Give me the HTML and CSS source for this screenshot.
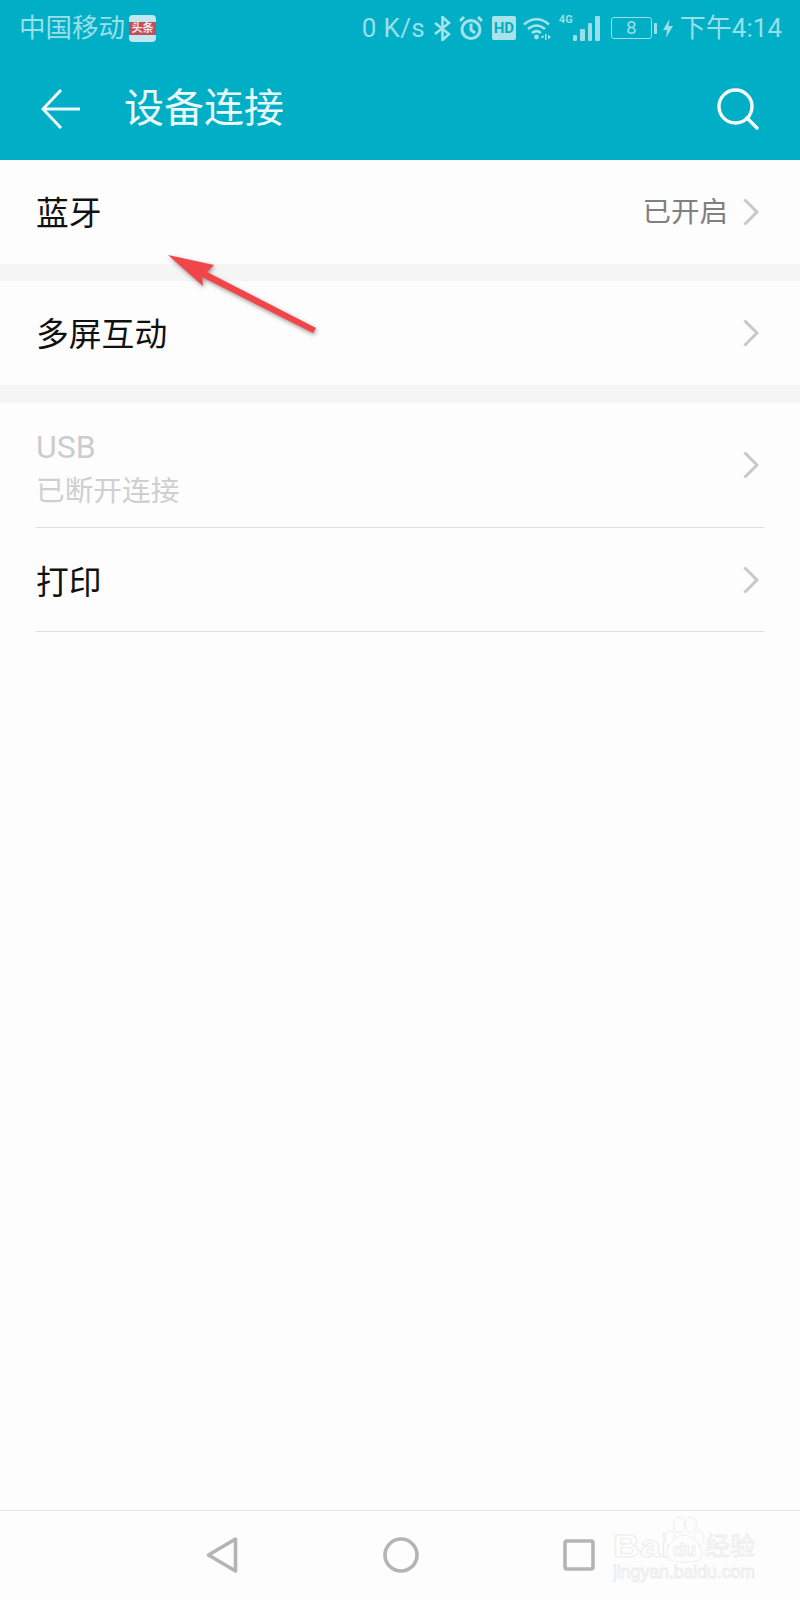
FILE: index.html
```html
<!DOCTYPE html>
<html lang="zh-CN">
<head>
<meta charset="utf-8">
<title>设备连接</title>
<link rel="stylesheet" href="styles.css">
</head>
<body>
<div class="page">
  <header class="appbar">
    <div class="status">
      <span class="carrier">中国移动</span>
      <span class="news-badge"><span class="news-band">头条</span></span>
      <span class="status-right">
        <span class="speed">0 K/s</span>
        <svg class="ic ic-bt" viewBox="0 0 17 25"><path d="M1 7l14 11-6.500 6V1l6.500 6L1 18" /></svg>
        <svg class="ic ic-alarm" viewBox="0 0 24 24"><circle cx="12" cy="13.500" r="9"/><path d="M12 7.500v6.500l4 3M1 5l4-4M23 5l-4-4"/></svg>
        <span class="hd">HD</span>
        <svg class="ic ic-wifi" viewBox="0 0 29 24"><path d="M1.500 8.500c7.500-7 17.500-7 25 0M5.500 13c5.500-4.500 11.500-4.500 17 0M9.500 17c3-2.500 6-2.500 9 0"/><circle class="solid" cx="14" cy="21" r="2.400"/><path class="solid" d="M21 18.500l-3 3.500h3zM22.500 18h1.500v6h-1.500zM25.500 18.500l3 2.500-3 2.500z"/></svg>
        <span class="net">4G</span>
        <span class="signal"><i class="bar b1"></i><i class="bar b2"></i><i class="bar b3"></i><i class="bar b4"></i></span>
        <span class="battery">8</span>
        <span class="nub"></span>
        <svg class="ic-bolt" viewBox="0 0 10 19"><path d="M6.500 0L0 11h4l-1 8 7-12H5.500z"/></svg>
        <span class="clock">下午4:14</span>
      </span>
    </div>
    <div class="toolbar">
      <svg class="back" viewBox="0 0 40 40"><path d="M39 20H2M20 1L2 20l18 19"/></svg>
      <h1 class="title">设备连接</h1>
      <svg class="search" viewBox="0 0 42 42"><circle cx="18.500" cy="18.500" r="16.500"/><path d="M30 30l10 10"/></svg>
    </div>
  </header>

  <main class="list">
    <section class="group">
      <div class="row row-tall">
        <span class="label">蓝牙</span>
        <span class="trail"><span class="value">已开启</span><svg class="chev" viewBox="0 0 16 28"><path d="M1.500 1.500L14 14 1.500 26.500"/></svg></span>
      </div>
    </section>
    <section class="group">
      <div class="row row-tall">
        <span class="label">多屏互动</span>
        <span class="trail"><svg class="chev" viewBox="0 0 16 28"><path d="M1.500 1.500L14 14 1.500 26.500"/></svg></span>
      </div>
    </section>
    <section class="group group-last">
      <div class="row row-usb row-line">
        <span class="stack"><span class="label label-off">USB</span><span class="sub">已断开连接</span></span>
        <span class="trail"><svg class="chev" viewBox="0 0 16 28"><path d="M1.500 1.500L14 14 1.500 26.500"/></svg></span>
      </div>
      <div class="row row-tall row-line">
        <span class="label label-low">打印</span>
        <span class="trail"><svg class="chev" viewBox="0 0 16 28"><path d="M1.500 1.500L14 14 1.500 26.500"/></svg></span>
      </div>
    </section>
  </main>

  <nav class="navbar">
    <svg class="nav-ic nav-back" viewBox="0 0 32 36"><path d="M29.500 2L2.500 18l27 16z"/></svg>
    <svg class="nav-ic nav-home" viewBox="0 0 36 36"><circle cx="18" cy="18" r="16"/></svg>
    <svg class="nav-ic nav-recent" viewBox="0 0 32 32"><rect x="2" y="2" width="28" height="28" rx="2"/></svg>
  </nav>

  <svg class="arrow" viewBox="0 0 800 400" aria-hidden="true">
    <path d="M168 255L214 265 207 272 316 328 313 333 202 277 203 286z"/>
  </svg>

  <svg class="watermark" viewBox="0 0 150 72" aria-hidden="true">
    <text class="wm-bai" x="0" y="42" textLength="58" lengthAdjust="spacingAndGlyphs">Bai</text>
    <g class="wm-paw">
      <ellipse cx="57" cy="23" rx="5" ry="7"/>
      <ellipse cx="66" cy="10" rx="5.500" ry="8"/>
      <ellipse cx="78" cy="10" rx="5.500" ry="8"/>
      <ellipse cx="86" cy="23" rx="5" ry="7"/>
      <path d="M54 38c0-9 9-18 17-18s18 10 18 19c0 7-6 8-18 8s-17-2-17-9z"/>
    </g>
    <text class="wm-du" x="60" y="41">du</text>
    <text class="wm-cn" x="92" y="40">经验</text>
    <text class="wm-url" x="0" y="63" textLength="142" lengthAdjust="spacingAndGlyphs">jingyan.baidu.com</text>
  </svg>
</div>
</body>
</html>
```
FILE: styles.css
```css
* { box-sizing: border-box; }
html, body { margin: 0; padding: 0; }
body {
  background: #fdfdfd;
  font-family: Roboto, "Noto Sans CJK SC", "Noto Sans", sans-serif;
}
.page {
  position: relative;
  width: 800px;
  height: 1600px;
  display: flex;
  flex-direction: column;
  overflow: hidden;
  background: #fdfdfd;
}

/* App bar */
.appbar { background: #00aec5; height: 160px; flex: none; }
.status {
  height: 54px;
  display: flex;
  align-items: center;
  padding: 2px 18px 0 19px;
  color: #9adfe8;
  font-size: 26px;
  line-height: 30px;
}
.carrier { font-size: 26.500px; }
.news-badge {
  width: 27px;
  height: 27px;
  margin-left: 4px;
  border-radius: 4px;
  background: #c3e7ee;
  display: flex;
  align-items: center;
}
.news-band {
  width: 100%;
  height: 13px;
  background: #c2505c;
  color: #f6e4e4;
  font-size: 11px;
  font-weight: 700;
  line-height: 13px;
  text-align: center;
}
.status-right { margin-left: auto; display: flex; align-items: center; height: 52px; }
.speed { width: 72px; letter-spacing: .3px; }
.ic { fill: none; stroke: #a4e2ea; stroke-width: 2.600; display: block; }
.ic .solid { fill: #a4e2ea; stroke: none; }
.ic-bt { width: 17px; height: 25px; }
.ic-alarm { width: 24px; height: 24px; margin-left: 8px; stroke-width: 3; }
.hd {
  width: 24px;
  height: 24px;
  margin-left: 9px;
  border-radius: 2px;
  background: #a9e3ea;
  color: #00aec5;
  font-size: 15px;
  font-weight: 700;
  line-height: 24px;
  text-align: center;
}
.ic-wifi { width: 30px; height: 24px; margin-left: 6px; }
.net {
  width: 14px;
  margin-left: 7px;
  align-self: flex-start;
  margin-top: 12px;
  font-size: 11px;
  font-weight: 700;
  line-height: 12px;
  white-space: nowrap;
}
.signal { display: flex; align-items: flex-end; gap: 3px; height: 25px; width: 27px; }
.bar { display: block; width: 4.500px; background: #9adfe8; border-radius: 1px; }
.b1 { height: 6px; }
.b2 { height: 12px; }
.b3 { height: 18px; }
.b4 { height: 25px; }
.battery {
  width: 41px;
  height: 22px;
  margin-left: 11px;
  border: 1.500px solid #9adfe8;
  border-radius: 3px;
  font-size: 19px;
  line-height: 19px;
  text-align: center;
}
.nub { width: 3px; height: 11px; margin-left: 2px; background: #9adfe8; border-radius: 1px; }
.ic-bolt { width: 10px; height: 19px; margin-left: 6px; fill: #9adfe8; display: block; }
.clock { margin-left: 7px; white-space: nowrap; }

.toolbar {
  height: 106px;
  padding: 3px 41px 0 41px;
  display: flex;
  align-items: center;
}
.back { width: 40px; height: 40px; fill: none; stroke: #eefafb; stroke-width: 3; flex: none; }
.title {
  margin: 0 0 0 43px;
  color: #eafafb;
  font-size: 40px;
  font-weight: 400;
  line-height: 48px;
}
.search { width: 42px; height: 42px; margin-left: auto; fill: none; stroke: #f7fdfe; stroke-width: 3.400; stroke-linecap: round; flex: none; }

/* List */
.list { flex: 1; }
.group { background: #fdfdfd; border-bottom: 17px solid #f5f5f5; }
.group + .group + .group { border-top: 1px solid #f5f5f5; }
.group-last { border-bottom: 0; }
.row {
  display: flex;
  align-items: center;
  justify-content: space-between;
  margin: 0 36px;
  padding-right: 5px;
}
.row-tall { height: 104px; }
.row-usb { height: 125px; }
.row-line { border-bottom: 1px solid #dedede; }
.label { color: #111; font-size: 32.800px; line-height: 40px; padding-top: 3px; }
.label-low { padding-top: 7px; }
.label-off { color: #cccccc; font-size: 32px; line-height: 38px; padding-top: 0; }
.stack { display: flex; flex-direction: column; padding-top: 6px; }
.sub { color: #cfcfcf; font-size: 28.700px; line-height: 36px; margin-top: 7px; }
.trail { display: flex; align-items: center; }
.value { color: #808080; font-size: 28.500px; line-height: 36px; margin-right: 15px; padding-top: 2px; }
.chev { width: 16px; height: 28px; fill: none; stroke: #c8c8c8; stroke-width: 3; display: block; }

/* Navigation bar */
.navbar {
  height: 90px;
  flex: none;
  border-top: 1px solid #e2e2e2;
  position: relative;
  display: grid;
  grid-template-columns: 206px 32px 145px 36px 144px 32px;
  align-items: center;
  padding-bottom: 1px;
}
.nav-ic { fill: none; stroke: #b4b4b4; stroke-width: 3.600; stroke-linejoin: round; display: block; }
.nav-back { width: 32px; height: 36px; grid-column: 2; }
.nav-home { width: 36px; height: 36px; grid-column: 4; }
.nav-recent { width: 32px; height: 32px; grid-column: 6; }

/* Overlays */
.arrow {
  position: absolute;
  left: 0;
  top: 0;
  width: 800px;
  height: 400px;
  fill: #f0464a;
  filter: drop-shadow(1px 2px 2px rgba(60, 20, 20, .45));
  pointer-events: none;
}
.watermark {
  position: absolute;
  left: 613px;
  top: 1515px;
  width: 150px;
  height: 72px;
  fill: none;
  stroke: #ececec;
  stroke-width: .9;
  font-family: "Liberation Sans", sans-serif;
}
.wm-bai { font-size: 31px; font-weight: 700; fill: #fdfdfd; }
.wm-paw { fill: #fdfdfd; }
.wm-du { font-size: 19px; font-weight: 700; fill: #fdfdfd; }
.wm-cn { font-family: "Noto Sans CJK SC", sans-serif; font-size: 25px; fill: #fdfdfd; }
.wm-url { font-size: 18px; fill: #fdfdfd; }
```
